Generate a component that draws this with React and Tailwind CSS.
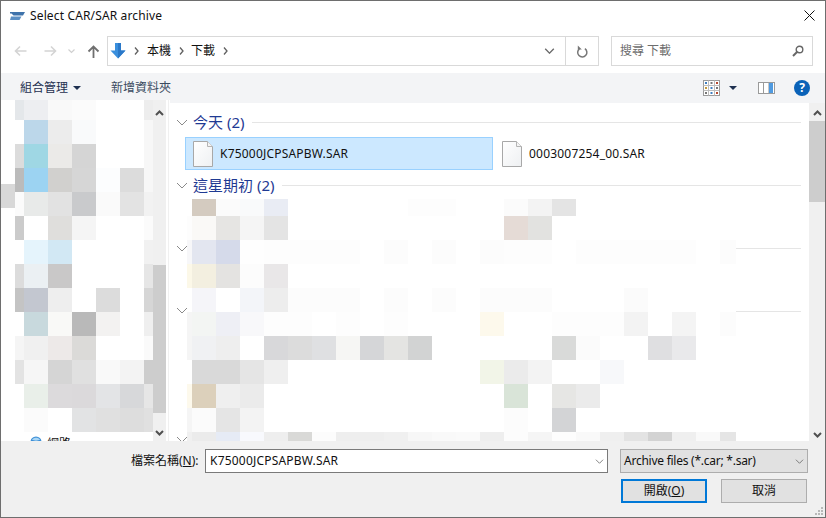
const leftRows = [
  ["#e4e7ea","#edeef1","#f9f9f9","#fbfbfb","#fff","#fff","#ededed"],
  ["#fff","#bcd7ea","#ececec","#f9fafb","#fff","#fff","#f7f7f7"],
  ["#dcdcdc","#9fd7e4","#ebeae8","#d5d5d5","#fff","#fff","#f7f7f7"],
  ["#bbbbbb","#9cd3f2","#d1d0ce","#d6d6d6","#fcfdfe","#dcdcdc","#f7f7f7"],
  ["#fbfbfb","#e8eae9","#e2e2e2","#c9cacc","#fafafa","#e3e3e3","#f2f2f2"],
  ["#cbcbcb","#fff","#dfdedc","#f5f5f5","#fff","#fff","#fbfbfb"],
  ["#fff","#e5f4fc","#d2e8f4","#fff","#fff","#fff","#f1f1f1"],
  ["#dcdcdc","#ebf0f3","#c9c8c8","#fff","#fff","#fff","#e6e6e6"],
  ["#c4c4c4","#c3c7d0","#eeeeee","#fff","#dcdcdc","#fff","#d6d6d6"],
  ["#fff","#c8d9dd","#f9f9f7","#b9b9b9","#f3f2f1","#fff","#efefef"],
  ["#f5f5f5","#f0f0f0","#ede9e8","#dbdad8","#fff","#fff","#fafafa"],
  ["#e3e3e3","#f6f6f6","#d5d5d5","#e0e0e0","#f9f9f9","#f3f3f3","#cdcdcd"],
  ["#fff","#e9efe9","#dcdadc","#dbd9db","#e3e4e6","#d7d8da","#e6e6e6"],
  ["#fff","#fbfbfb","#fff","#e2e3e4","#e0e0e0","#dddddd","#e0e0e0"],
];

// Sparse rows: key is the column index (-1 is the 5px sliver at the left).
const rightRows = [
  {0:"#d4cbc0",1:"#fbfbfb",2:"#f9fafb",3:"#e9ecf4",9:"#fdfdfd",10:"#fdfdfd",13:"#fbfbfb",14:"#f3f3f3",15:"#e4e4e4"},
  {"-1":"#fdfdfd",0:"#faf9f7",1:"#e6e5e3",2:"#f5f5f5",3:"#e4e4e4",13:"#e5dbd6",14:"#e2e2e0"},
  {"-1":"#f7f7f9",0:"#e3e6f0",1:"#d5daea",2:"#fefefe",3:"#fdfdfd",4:"#fdfdfd",5:"#fdfdfd",6:"#fdfdfd",8:"#fcfcfc",10:"#fcfcfc",12:"#fcfcfc",13:"#fdfdfd",14:"#fdfdfd",16:"#fdfdfd",17:"#fdfdfd",18:"#fdfdfd",19:"#fdfdfd",20:"#fdfdfd",22:"#fcfcfc"},
  {"-1":"#fcf8e8",0:"#f3efe0",1:"#e4e3e1",2:"#fcfcfc",3:"#e9e7e8"},
  {0:"#f5f5f9",2:"#f3f5f9",3:"#ededed",4:"#fcfcfc",5:"#fcfcfc",6:"#fcfcfc",8:"#fcfcfc",10:"#fcfcfc",12:"#fcfcfc",13:"#fcfcfc",14:"#fcfcfc",18:"#fbfbfb"},
  {"-1":"#f5f5f5",0:"#f3f5f3",1:"#eeeff5",2:"#f8f8fa",3:"#fdfdfd",4:"#fdfdfd",6:"#fdfdfd",8:"#fdfdfd",12:"#fdf9ec",15:"#fdfdfd",16:"#fdfdfd",17:"#fdfdfd",18:"#f3f3f3",20:"#f4f4f4",22:"#fcfcfc"},
  {"-1":"#f5f5f5",0:"#f0f1f3",1:"#eeeeee",3:"#d8d8da",4:"#dcdcdc",5:"#dfe0e2",6:"#f6f6f4",7:"#d5d6d8",8:"#e4e4e2",9:"#d2d3d3",15:"#d9dad9",16:"#fbfbfb",19:"#dfdfe1",20:"#e9e9eb"},
  {0:"#d9d9d9",1:"#d9d9d9",2:"#e5e5e5",3:"#efefef",12:"#f2f5e8",13:"#ebebeb",14:"#f3f3f3",17:"#f7f8fa"},
  {"-1":"#fdf9ec",0:"#dcd0bb",1:"#efefef",2:"#ebebeb",13:"#d9e4d8",15:"#e6e6e4",16:"#ebebeb"},
  {"-1":"#f5f5f5",0:"#fbfbfb",1:"#e5e5e5",2:"#f3f3f3",13:"#fcfcfc",15:"#d3d4d6"},
  {"-1":"#f0f0f0",0:"#ebebeb",1:"#e6ebf5",2:"#f8f9fd",3:"#eeeeee",4:"#d9d9d7",5:"#fcfcfc",6:"#eeeeee",7:"#eeeeee",8:"#f0f0f0",9:"#f7f7f7",10:"#f9f9f9",11:"#fafafa",12:"#eeeeee",13:"#fcfcfc",14:"#f5f5f5",15:"#fdfdfd",16:"#f9f9f9",17:"#efefef",18:"#e3e3e3",19:"#d3d3d3",20:"#efefef",21:"#f9f9f9",22:"#e5e5e5"},
];

const Chev = ({ className = "", color = "#8a8a8a", w = 12, h = 7, sw = 1 }) => (
  <svg width={w} height={h} viewBox="0 0 12 7" className={className}>
    <path d="M1 1l5 5 5-5" fill="none" stroke={color} strokeWidth={sw} />
  </svg>
);
const ScrollUp = () => (
  <svg width="9" height="6" viewBox="0 0 9 6"><path d="M1 5l3.5-3.5L8 5" fill="none" stroke="#505050" strokeWidth="2" /></svg>
);
const ScrollDown = () => (
  <svg width="9" height="6" viewBox="0 0 9 6"><path d="M1 1l3.5 3.5L8 1" fill="none" stroke="#505050" strokeWidth="2" /></svg>
);
const Crumb = () => (
  <svg width="5" height="8" viewBox="0 0 5 8" className="block"><path d="M1 0.5l3 3.5-3 3.5" fill="none" stroke="#606060" strokeWidth="1.3" /></svg>
);
const FileIcon = () => (
  <svg width="20" height="26" viewBox="0 0 20 26" className="shrink-0">
    <defs>
      <linearGradient id="fg" x1="0" y1="0" x2="1" y2="1">
        <stop offset="0" stopColor="#ffffff" />
        <stop offset="1" stopColor="#eef0f2" />
      </linearGradient>
    </defs>
    <path d="M0.5 0.5H14.5L19.5 5.5V25.5H0.5Z" fill="url(#fg)" stroke="#a8a8a8" />
    <path d="M14.5 0.5V5.5H19.5" fill="#f4f4f4" stroke="#b4b4b4" />
  </svg>
);

const GroupHeader = ({ label, className = "" }) => (
  <div className={`flex h-5 items-center ${className}`}>
    <Chev className="ml-[6px] mr-[5px] shrink-0" />
    <span className="text-[15px] leading-5 text-[#1f3a93]">{label}</span>
    <div className="ml-2 mr-[8px] h-px flex-1 bg-[#e5e5e5]" />
  </div>
);

const FileRow = ({ name, selected }) => (
  <div className={`flex items-center border ${selected ? "w-[308px] border-[#99d1ff] bg-[#cce8ff] pl-[7px]" : "ml-[8px] border-transparent"} h-[33px]`}>
    <FileIcon />
    <span className="ml-[7px] text-[12px] tracking-[0.2px] text-[#111]">{name}</span>
  </div>
);

export default function App() {
  return (
    <div className="flex h-[518px] w-[826px] flex-col overflow-hidden border border-[#6e6e6e] bg-white font-['Noto_Sans','Noto_Sans_CJK_TC',sans-serif] text-[12px] text-[#111]">
      {/* Title bar */}
      <div className="flex h-[29px] shrink-0 items-center pl-[9px] pr-[9px]">
        <svg width="15" height="8" viewBox="0 0 15 8" className="shrink-0">
          <path d="M0 0H15L13 3.5H3.5L1.5 1.5H0Z" fill="#3f73ab" />
          <path d="M1 4.5H11.5L9.5 8H0Z" fill="#5b8fc4" />
        </svg>
        <span className="ml-[5px] text-[12px] tracking-[0.14px]">Select CAR/SAR archive</span>
        <svg width="11" height="11" viewBox="0 0 11 11" className="ml-auto mr-[1px]">
          <path d="M0.5 0.5l10 10M10.5 0.5l-10 10" stroke="#111" strokeWidth="1" />
        </svg>
      </div>

      {/* Navigation bar */}
      <div className="flex h-[43px] shrink-0 items-start pt-[6px]">
        <div className="flex h-[30px] w-[106px] shrink-0 items-center">
          <svg width="13" height="12" viewBox="0 0 13 12" className="ml-[13px]">
            <path d="M12.5 6H1.5M6 1.5L1.5 6 6 10.5" fill="none" stroke="#d4d4d4" strokeWidth="1.6" />
          </svg>
          <svg width="13" height="12" viewBox="0 0 13 12" className="ml-[17px]">
            <path d="M0.5 6H11.5M7 1.5L11.5 6 7 10.5" fill="none" stroke="#d4d4d4" strokeWidth="1.6" />
          </svg>
          <svg width="7" height="5" viewBox="0 0 7 5" className="ml-[11px]">
            <path d="M0.5 0.5L3.5 3.5 6.5 0.5" fill="none" stroke="#d0d0d0" strokeWidth="1.2" />
          </svg>
          <svg width="13" height="13" viewBox="0 0 13 13" className="ml-[12px]">
            <path d="M6.5 13V2M1.5 6.5L6.5 1.5 11.5 6.5" fill="none" stroke="#6f6f6f" strokeWidth="1.8" />
          </svg>
        </div>
        <div className="flex h-[30px] w-[492px] shrink-0 items-center border border-[#d9d9d9]">
          <svg width="16" height="16" viewBox="0 0 16 16" className="ml-[2px] shrink-0">
            <path d="M5 0H11V7.5H15.5L8 15.5.5 7.5H5Z" fill="#3a8fdd" />
            <path d="M8 0H11V7.5H15.5L8 15.5Z" fill="#2a78c8" />
          </svg>
          <span className="ml-[8px]"><Crumb /></span>
          <span className="ml-[8px]">本機</span>
          <span className="ml-[8px]"><Crumb /></span>
          <span className="ml-[7px]">下載</span>
          <span className="ml-[8px]"><Crumb /></span>
          <Chev className="ml-auto mr-[10px]" color="#6a6a6a" w={11} h={6} sw={1.6} />
          <div className="flex h-full w-[33px] items-center justify-center border-l border-[#d9d9d9]">
            <svg width="12" height="13" viewBox="0 0 12 13">
              <path d="M8.5 2.6A4.6 4.6 0 1 1 3 2.8" fill="none" stroke="#777" strokeWidth="1.5" transform="translate(0.4 1)" />
              <path d="M1.8 0.6V4.6H5.8Z" fill="#777" />
            </svg>
          </div>
        </div>
        <div className="ml-[12px] flex h-[30px] w-[202px] shrink-0 items-center border border-[#d9d9d9] pl-[8px] pr-[8px] text-[#6d6d6d]">
          <span>搜尋 下載</span>
          <svg width="12" height="12" viewBox="0 0 12 12" className="ml-auto">
            <circle cx="7.5" cy="4.5" r="3.3" fill="none" stroke="#666" strokeWidth="1.4" />
            <path d="M5 7L1 11" stroke="#666" strokeWidth="2" />
          </svg>
        </div>
      </div>

      {/* Toolbar */}
      <div className="flex h-[27px] shrink-0 items-center bg-[#f3f4f6] pl-[19px] pt-[2px]">
        <span className="text-[#1e3050]">組合管理</span>
        <svg width="8" height="4" viewBox="0 0 8 4" className="ml-[5px]"><path d="M0 0H8L4 4Z" fill="#1e3050" /></svg>
        <span className="ml-[31px] -translate-x-px text-[#3a4a60]">新增資料夾</span>
        <svg width="17" height="16" viewBox="0 0 17 16" className="ml-auto">
          <rect x="0.5" y="0.5" width="16" height="15" fill="#fff" stroke="#9a9a9a" />
          <path d="M5.5 0.5V15.5M11.5 0.5V15.5M0.5 5.5H16.5M0.5 10.5H16.5" stroke="#bdbdbd" />
          <rect x="2" y="2" width="2" height="2" fill="#3f7fc0" /><rect x="7.5" y="2" width="2" height="2" fill="#777" /><rect x="13" y="2" width="2" height="2" fill="#b5482f" />
          <rect x="2" y="7" width="2" height="2" fill="#c49a3a" /><rect x="7.5" y="7" width="2" height="2" fill="#3f7fc0" /><rect x="13" y="7" width="2" height="2" fill="#777" />
          <rect x="2" y="12" width="2" height="2" fill="#777" /><rect x="7.5" y="12" width="2" height="2" fill="#3f7fc0" /><rect x="13" y="12" width="2" height="2" fill="#b5482f" />
        </svg>
        <svg width="8" height="4" viewBox="0 0 8 4" className="ml-[9px]"><path d="M0 0H8L4 4Z" fill="#1e3050" /></svg>
        <svg width="17" height="12" viewBox="0 0 17 12" className="ml-[21px]">
          <rect x="0.5" y="0.5" width="16" height="11" fill="#fff" stroke="#9a9a9a" />
          <rect x="5" y="1" width="1" height="10" fill="#9a9a9a" />
          <rect x="10" y="1" width="1" height="10" fill="#c8c8c8" />
          <rect x="11" y="1" width="4" height="10" fill="#4f9ae0" />
        </svg>
        <div className="ml-[19px] mr-[15px] flex h-4 w-4 items-center justify-center rounded-full bg-[#0a62b8] text-[12px] font-bold leading-none text-white">?</div>
      </div>

      {/* Body */}
      <div className="flex h-[341px] shrink-0">
        {/* Navigation pane */}
        <div className="relative flex w-[152px] shrink-0 flex-col overflow-hidden pl-[14px]">
          <div className="absolute left-0 top-[84px] h-6 w-[14px] bg-[#d8d8d8]" />
          <div className="grid grid-cols-[9px_repeat(5,24px)_9px] grid-rows-[20px_repeat(13,24px)]">
            {leftRows.flatMap((row, r) =>
              row.map((c, i) => <div key={`${r}-${i}`} style={{ backgroundColor: c }} />)
            )}
          </div>
          <div className="flex h-[9px] items-start overflow-hidden pt-[4px]">
            <svg width="12" height="12" viewBox="0 0 12 12" className="ml-[15px] shrink-0">
              <circle cx="6" cy="6" r="5.5" fill="#3d8fd6" />
              <path d="M2 3.5C4 1 8 1 10 3.5 8 5 4 5 2 3.5Z" fill="#a9d6f5" />
            </svg>
            <span className="ml-[5px] leading-[16px]">網路</span>
          </div>
        </div>
        <div className="flex w-[13px] shrink-0 flex-col items-center bg-[#f0f0f0]">
          <div className="flex h-[26px] w-full shrink-0 items-center justify-center"><ScrollUp /></div>
          <div className="mt-[139px] h-[148px] w-full shrink-0 bg-[#cdcdcd]" />
          <div className="mt-auto flex h-[28px] w-full shrink-0 items-end justify-center pb-[5px]"><ScrollDown /></div>
        </div>
        <div className="w-[2px] shrink-0" />
        <div className="w-px shrink-0 bg-[#f0f0f0]" />
        <div className="w-px shrink-0" />

        {/* File list */}
        <div className="flex min-w-0 flex-1 flex-col overflow-hidden border-t-[3px] border-[#f3f4f6]">
          <GroupHeader label="今天 (2)" className="mt-[9px]" />
          <div className="mt-[5px] flex items-center pl-[15px]">
            <FileRow name="K75000JCPSAPBW.SAR" selected />
            <FileRow name="0003007254_00.SAR" />
          </div>
          <GroupHeader label="這星期初 (2)" className="mt-[5px]" />
          <div className="relative mt-[4px] ml-[17px]">
            <div className="grid grid-cols-[5px_repeat(22,24px)_16px] grid-rows-[17px_repeat(9,24px)_9px]">
              {rightRows.flatMap((row, r) =>
                Array.from({ length: 24 }, (_, i) => (
                  <div key={`${r}-${i}`} style={{ backgroundColor: row[i - 1] || "#fff" }} />
                ))
              )}
            </div>
            <Chev className="absolute left-[-11px] top-[46px]" />
            <Chev className="absolute left-[-11px] top-[108px]" />
            <Chev className="absolute left-[-11px] top-[237px]" />
            <div className="absolute left-[549px] top-[49px] h-px w-[65px] bg-[#e5e5e5]" />
            <div className="absolute left-[549px] top-[112px] h-px w-[65px] bg-[#e5e5e5]" />
          </div>
        </div>

        <div className="flex w-4 shrink-0 flex-col border-t-[3px] border-[#f3f4f6] bg-[#f0f0f0]">
          <div className="flex h-[17px] shrink-0 items-center justify-center pt-[2px]"><ScrollUp /></div>
          <div className="mt-px h-[81px] shrink-0 bg-[#cdcdcd]" />
          <div className="mt-auto flex h-[17px] shrink-0 items-center justify-center pt-[4px]"><ScrollDown /></div>
        </div>
      </div>

      {/* Footer */}
      <div className="relative flex flex-1 flex-col bg-[#f0f0f0] pt-[8px]">
        <div className="flex h-6 items-center">
          <span className="ml-[130px] w-[74px] shrink-0 whitespace-nowrap">檔案名稱(<u>N</u>):</span>
          <div className="flex h-6 w-[403px] shrink-0 items-center border border-[#7a7a7a] bg-white pl-[4px] pr-[2px]">
            <span className="tracking-[0.2px]">K75000JCPSAPBW.SAR</span>
            <Chev className="ml-auto mr-[1px]" color="#555" w={9} h={5} />
          </div>
          <div className="ml-[12px] flex h-6 w-[188px] shrink-0 items-center border border-[#adadad] bg-[#e1e1e1] pl-[3px] pr-[2px]">
            <span className="whitespace-nowrap tracking-[-0.25px]">Archive files (*.car; *.sar)</span>
            <Chev className="ml-auto mr-[1px]" color="#555" w={9} h={5} />
          </div>
        </div>
        <div className="mt-[6px] flex justify-end pr-[18px]">
          <div className="flex h-6 w-[86px] items-center justify-center border-2 border-[#0078d7] bg-[#e1e1e1]">開啟(<u>O</u>)</div>
          <div className="ml-[14px] flex h-6 w-[86px] items-center justify-center border border-[#adadad] bg-[#e1e1e1]">取消</div>
        </div>
        <svg width="10" height="10" viewBox="0 0 10 10" className="absolute bottom-[1px] right-[1px]">
          <g fill="#b8b8b8">
            <rect x="7" y="1" width="2" height="2" /><rect x="4" y="4" width="2" height="2" /><rect x="7" y="4" width="2" height="2" />
            <rect x="1" y="7" width="2" height="2" /><rect x="4" y="7" width="2" height="2" /><rect x="7" y="7" width="2" height="2" />
          </g>
        </svg>
      </div>
    </div>
  );
}
